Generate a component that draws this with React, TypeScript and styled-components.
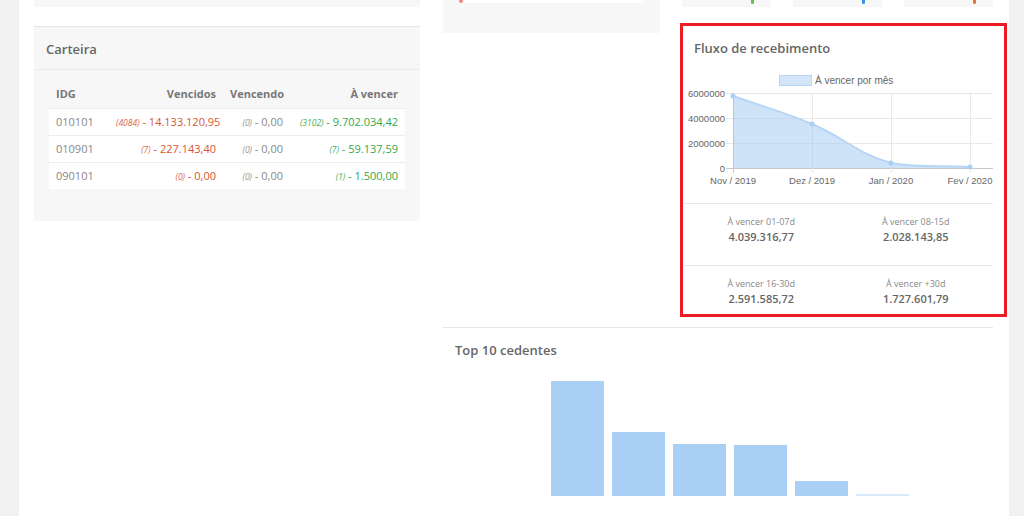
import React from "react";
import styled, { createGlobalStyle } from "styled-components";

const GlobalStyle = createGlobalStyle`
  html, body {
    margin: 0;
    padding: 0;
    background: #f1f1f1;
    font-family: "Open Sans", "Noto Sans", sans-serif;
  }
  * { box-sizing: border-box; }
`;

const tones = {
  red: "#d9542e",
  green: "#35a849",
  grey: "#8a8a8a",
};

type Tone = keyof typeof tones;

const Page = styled.div`
  display: flex;
  min-height: 100vh;
`;

const Shell = styled.div`
  margin-left: 19px;
  width: 990px;
  min-height: 516px;
  background: #fff;
  padding: 0 16px 0 15px;
  display: flex;
  align-items: flex-start;
  gap: 23px;
`;

const LeftCol = styled.div`
  width: 386px;
  display: flex;
  flex-direction: column;
`;

const StubCard = styled.div<{ $h: number }>`
  height: ${(p) => p.$h}px;
  background: #f7f7f7;
`;

const Panel = styled.section`
  margin-top: 19px;
  height: 195px;
  background: #f7f7f7;
  border-top: 1px solid #e4e4e4;
`;

const PanelHeader = styled.header`
  height: 43px;
  padding: 13px 12px 0;
  border-bottom: 1px solid #ebebeb;
`;

const Title = styled.h3`
  margin: 0;
  font-size: 13px;
  line-height: 18px;
  font-weight: 600;
  color: #666;
`;

const PanelBody = styled.div`
  padding: 10px 15px 0;
`;

const Table = styled.table`
  width: 356px;
  table-layout: fixed;
  border-collapse: collapse;
  font-size: 11px;
`;

const Th = styled.th<{ $w: number; $right?: boolean }>`
  width: ${(p) => p.$w}px;
  height: 28px;
  padding: 0 7px;
  text-align: ${(p) => (p.$right ? "right" : "left")};
  font-weight: 700;
  color: #777;
`;

const Tr = styled.tr`
  background: #fff;
  border-top: 1px solid #ececec;
`;

const Td = styled.td<{ $right?: boolean }>`
  height: 27px;
  padding: 0 7px;
  text-align: ${(p) => (p.$right ? "right" : "left")};
  color: #888;
  white-space: nowrap;
`;

const Count = styled.i<{ $tone: Tone }>`
  font-size: 8.5px;
  color: ${(p) => tones[p.$tone]};
  opacity: 0.9;
`;

const Value = styled.span<{ $tone: Tone }>`
  color: ${(p) => tones[p.$tone]};
`;

const RightCol = styled.div`
  width: 550px;
  display: flex;
  flex-direction: column;
`;

const TopGrid = styled.div`
  display: grid;
  grid-template-columns: 217px 313px;
  column-gap: 20px;
  align-items: start;
`;

const StubTall = styled.div`
  height: 33px;
  background: #f7f7f7;
  padding: 0 16px;
  display: flex;
  align-items: flex-start;
`;

const PinkDot = styled.span`
  width: 4px;
  height: 3px;
  border-radius: 0 0 2px 2px;
  background: #f08a8a;
`;

const WhiteBar = styled.span`
  flex: 1;
  height: 3px;
  margin-left: 1px;
  background: #fff;
`;

const Stack = styled.div`
  display: flex;
  flex-direction: column;
`;

const MiniRow = styled.div`
  display: flex;
  gap: 22px;
  padding-left: 2px;
`;

const MiniCard = styled.div`
  width: 89px;
  height: 7px;
  background: #f7f7f7;
  display: flex;
  justify-content: flex-end;
  padding-right: 17px;
`;

const MiniDot = styled.span<{ $c: string }>`
  width: 3px;
  height: 4px;
  border-radius: 0 0 2px 2px;
  background: ${(p) => p.$c};
`;

const Highlight = styled.div`
  margin-top: 16px;
  width: 327px;
  height: 294px;
  border: 3px solid #ec1c24;
  background: #fff;
  display: flex;
  flex-direction: column;
  align-items: flex-start;
  overflow: hidden;

  & > * {
    flex-shrink: 0;
  }
`;

const CardTitle = styled(Title)`
  padding: 13px 11px 0;
`;

const ChartSvg = styled.svg`
  display: block;
  margin: 11px 0 9px 1px;
  font-family: "Liberation Sans", Arial, sans-serif;
`;

const Stats = styled.div`
  width: 309px;
  margin-left: 1px;
`;

const StatRow = styled.div`
  display: grid;
  grid-template-columns: 1fr 1fr;
  border-top: 1px solid #e8e8e8;
  padding: 11px 0 21px;
`;

const Stat = styled.div`
  display: flex;
  flex-direction: column;
  align-items: center;
  gap: 1px;
`;

const StatLabel = styled.span`
  font-size: 9px;
  line-height: 13px;
  color: #888;
`;

const StatValue = styled.span`
  font-size: 11px;
  line-height: 15px;
  font-weight: 600;
  color: #666;
`;

const Section = styled.section`
  margin-top: 10px;
  border-top: 1px solid #e6e6e6;
  padding: 13px 12px 0;
`;

const Bars = styled.div`
  height: 137px;
  display: flex;
  align-items: flex-end;
  gap: 8px;
  padding-left: 96px;
`;

const Bar = styled.div<{ $h: number; $faint?: boolean }>`
  width: 53px;
  height: ${(p) => p.$h}px;
  background: ${(p) => (p.$faint ? "#d8e9fa" : "#aacff4")};
`;

const carteira: {
  idg: string;
  cells: { n: string; v: string; tone: Tone }[];
}[] = [
  {
    idg: "010101",
    cells: [
      { n: "4084", v: "14.133.120,95", tone: "red" },
      { n: "0", v: "0,00", tone: "grey" },
      { n: "3102", v: "9.702.034,42", tone: "green" },
    ],
  },
  {
    idg: "010901",
    cells: [
      { n: "7", v: "227.143,40", tone: "red" },
      { n: "0", v: "0,00", tone: "grey" },
      { n: "7", v: "59.137,59", tone: "green" },
    ],
  },
  {
    idg: "090101",
    cells: [
      { n: "0", v: "0,00", tone: "red" },
      { n: "0", v: "0,00", tone: "grey" },
      { n: "1", v: "1.500,00", tone: "green" },
    ],
  },
];

const stats = [
  [
    { label: "À vencer 01-07d", value: "4.039.316,77" },
    { label: "À vencer 08-15d", value: "2.028.143,85" },
  ],
  [
    { label: "À vencer 16-30d", value: "2.591.585,72" },
    { label: "À vencer +30d", value: "1.727.601,79" },
  ],
];

const cedentes = [115, 64, 52, 51, 15, 2];

const xs = [49, 128, 207, 286];
const gridY = [25, 50, 75, 100];
const yLabels = ["6000000", "4000000", "2000000", "0"];
const months = ["Nov / 2019", "Dez / 2019", "Jan / 2020", "Fev / 2020"];
const points = [
  [49, 28],
  [128, 56],
  [207, 95],
  [286, 99],
];
const curve =
  "M49,28 C80.6,39.2 97.2,42.9 128,56 C160.4,69.7 173.7,85.9 207,95 C236.9,100 254.4,97.4 286,99";

const FluxoChart = () => (
  <ChartSvg width={309} height={126} viewBox="0 0 309 126">
    <rect x={95.5} y={7.5} width={32} height={10} fill="#d3e5f8" stroke="#b7d6f5" strokeWidth={1} />
    <text x={131} y={16} fontSize={10} fill="#666">
      À vencer por mês
    </text>
    {gridY.map((y, i) => (
      <g key={y}>
        <line x1={42} x2={309} y1={y + 0.5} y2={y + 0.5} stroke={i === 3 ? "#c8c8c8" : "#e8e8e8"} />
        <text x={41} y={y + 3.5} fontSize={9.5} fill="#666" textAnchor="end">
          {yLabels[i]}
        </text>
      </g>
    ))}
    {xs.map((x, i) => (
      <g key={x}>
        <line x1={x + 0.5} x2={x + 0.5} y1={25} y2={105} stroke={i === 0 ? "#c8c8c8" : "#e8e8e8"} />
        <text x={x} y={116} fontSize={9.5} fill="#666" textAnchor="middle">
          {months[i]}
        </text>
      </g>
    ))}
    <path d={`${curve} L286,100 L49,100 Z`} fill="rgba(160,200,242,0.5)" />
    <path d={curve} fill="none" stroke="#b7d6f6" strokeWidth={2} />
    {points.map(([x, y]) => (
      <circle key={x} cx={x} cy={y} r={2.5} fill="#a9cff4" />
    ))}
  </ChartSvg>
);

export default function App() {
  return (
    <>
      <GlobalStyle />
      <Page>
        <Shell>
          <LeftCol>
            <StubCard $h={7} />
            <Panel>
              <PanelHeader>
                <Title>Carteira</Title>
              </PanelHeader>
              <PanelBody>
                <Table>
                  <thead>
                    <tr>
                      <Th $w={60}>IDG</Th>
                      <Th $w={114} $right>
                        Vencidos
                      </Th>
                      <Th $w={67} $right>
                        Vencendo
                      </Th>
                      <Th $w={115} $right>
                        À vencer
                      </Th>
                    </tr>
                  </thead>
                  <tbody>
                    {carteira.map((row) => (
                      <Tr key={row.idg}>
                        <Td>{row.idg}</Td>
                        {row.cells.map((c, i) => (
                          <Td key={i} $right>
                            <Count $tone={c.tone}>({c.n})</Count>
                            <Value $tone={c.tone}> - {c.v}</Value>
                          </Td>
                        ))}
                      </Tr>
                    ))}
                  </tbody>
                </Table>
              </PanelBody>
            </Panel>
          </LeftCol>

          <RightCol>
            <TopGrid>
              <StubTall>
                <PinkDot />
                <WhiteBar />
              </StubTall>
              <Stack>
                <MiniRow>
                  <MiniCard>
                    <MiniDot $c="#5cc04a" />
                  </MiniCard>
                  <MiniCard>
                    <MiniDot $c="#3b8fe0" />
                  </MiniCard>
                  <MiniCard>
                    <MiniDot $c="#e8703a" />
                  </MiniCard>
                </MiniRow>
                <Highlight>
                  <CardTitle>Fluxo de recebimento</CardTitle>
                  <FluxoChart />
                  <Stats>
                    {stats.map((row, i) => (
                      <StatRow key={i}>
                        {row.map((s) => (
                          <Stat key={s.label}>
                            <StatLabel>{s.label}</StatLabel>
                            <StatValue>{s.value}</StatValue>
                          </Stat>
                        ))}
                      </StatRow>
                    ))}
                  </Stats>
                </Highlight>
              </Stack>
            </TopGrid>

            <Section>
              <Title>Top 10 cedentes</Title>
              <Bars>
                {cedentes.map((h, i) => (
                  <Bar key={i} $h={h} $faint={i === cedentes.length - 1} />
                ))}
              </Bars>
            </Section>
          </RightCol>
        </Shell>
      </Page>
    </>
  );
}
